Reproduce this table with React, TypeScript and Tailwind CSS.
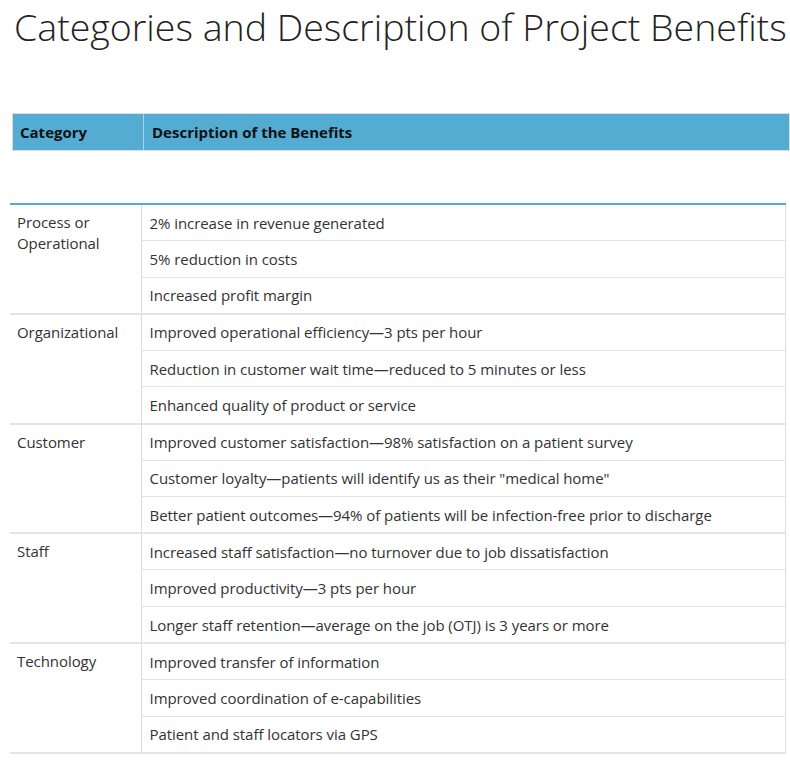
const groups: { category: string; items: string[] }[] = [
  {
    category: "Process or Operational",
    items: [
      "2% increase in revenue generated",
      "5% reduction in costs",
      "Increased profit margin",
    ],
  },
  {
    category: "Organizational",
    items: [
      "Improved operational efficiency\u20143 pts per hour",
      "Reduction in customer wait time\u2014reduced to 5 minutes or less",
      "Enhanced quality of product or service",
    ],
  },
  {
    category: "Customer",
    items: [
      "Improved customer satisfaction\u201498% satisfaction on a patient survey",
      'Customer loyalty\u2014patients will identify us as their "medical home"',
      "Better patient outcomes\u201494% of patients will be infection-free prior to discharge",
    ],
  },
  {
    category: "Staff",
    items: [
      "Increased staff satisfaction\u2014no turnover due to job dissatisfaction",
      "Improved productivity\u20143 pts per hour",
      "Longer staff retention\u2014average on the job (OTJ) is 3 years or more",
    ],
  },
  {
    category: "Technology",
    items: [
      "Improved transfer of information",
      "Improved coordination of e-capabilities",
      "Patient and staff locators via GPS",
    ],
  },
];

export default function App() {
  return (
    <div
      className="w-[790px] h-[760px] bg-white overflow-hidden text-[#333]"
      style={{ fontFamily: '"Open Sans", "Liberation Sans", sans-serif' }}
    >
      <h1 className="pl-[14px] pt-[3px] text-[37.5px] leading-[48px] font-light text-[#222] whitespace-nowrap">
        Categories and Description of Project Benefits
      </h1>

      <div className="ml-[12px] mt-[62px] w-[778px] border border-[#dcdcdc] bg-[#55acd3] flex text-[15px] font-bold text-[#111] h-[38px]">
        <div className="w-[131px] border-r border-[#a9d3e7] pl-[7px] flex items-center">
          Category
        </div>
        <div className="flex-1 pl-[8px] flex items-center">
          Description of the Benefits
        </div>
      </div>

      <table className="ml-[10px] mt-[52px] w-[776px] border-collapse border-t-2 border-t-[#55acd3] text-[15px] tracking-[-0.06px]">
        <tbody>
          {groups.map((g) =>
            g.items.map((item, i) => (
              <tr key={item}>
                {i === 0 && (
                  <td
                    rowSpan={3}
                    className="w-[131px] align-top pl-[7px] pr-2 pt-[7px] leading-[21px] border-b-2 border-[#e3e3e3] border-r border-r-[#dedede]"
                  >
                    {g.category}
                  </td>
                )}
                <td
                  className={
                    "h-[36.6px] pl-[8px] py-0 leading-[22px] border-r border-r-[#dedede] whitespace-nowrap " +
                    (i === 2
                      ? "border-b-2 border-b-[#e3e3e3]"
                      : "border-b border-b-[#e3e3e3]")
                  }
                >
                  {item}
                </td>
              </tr>
            ))
          )}
        </tbody>
      </table>
    </div>
  );
}
